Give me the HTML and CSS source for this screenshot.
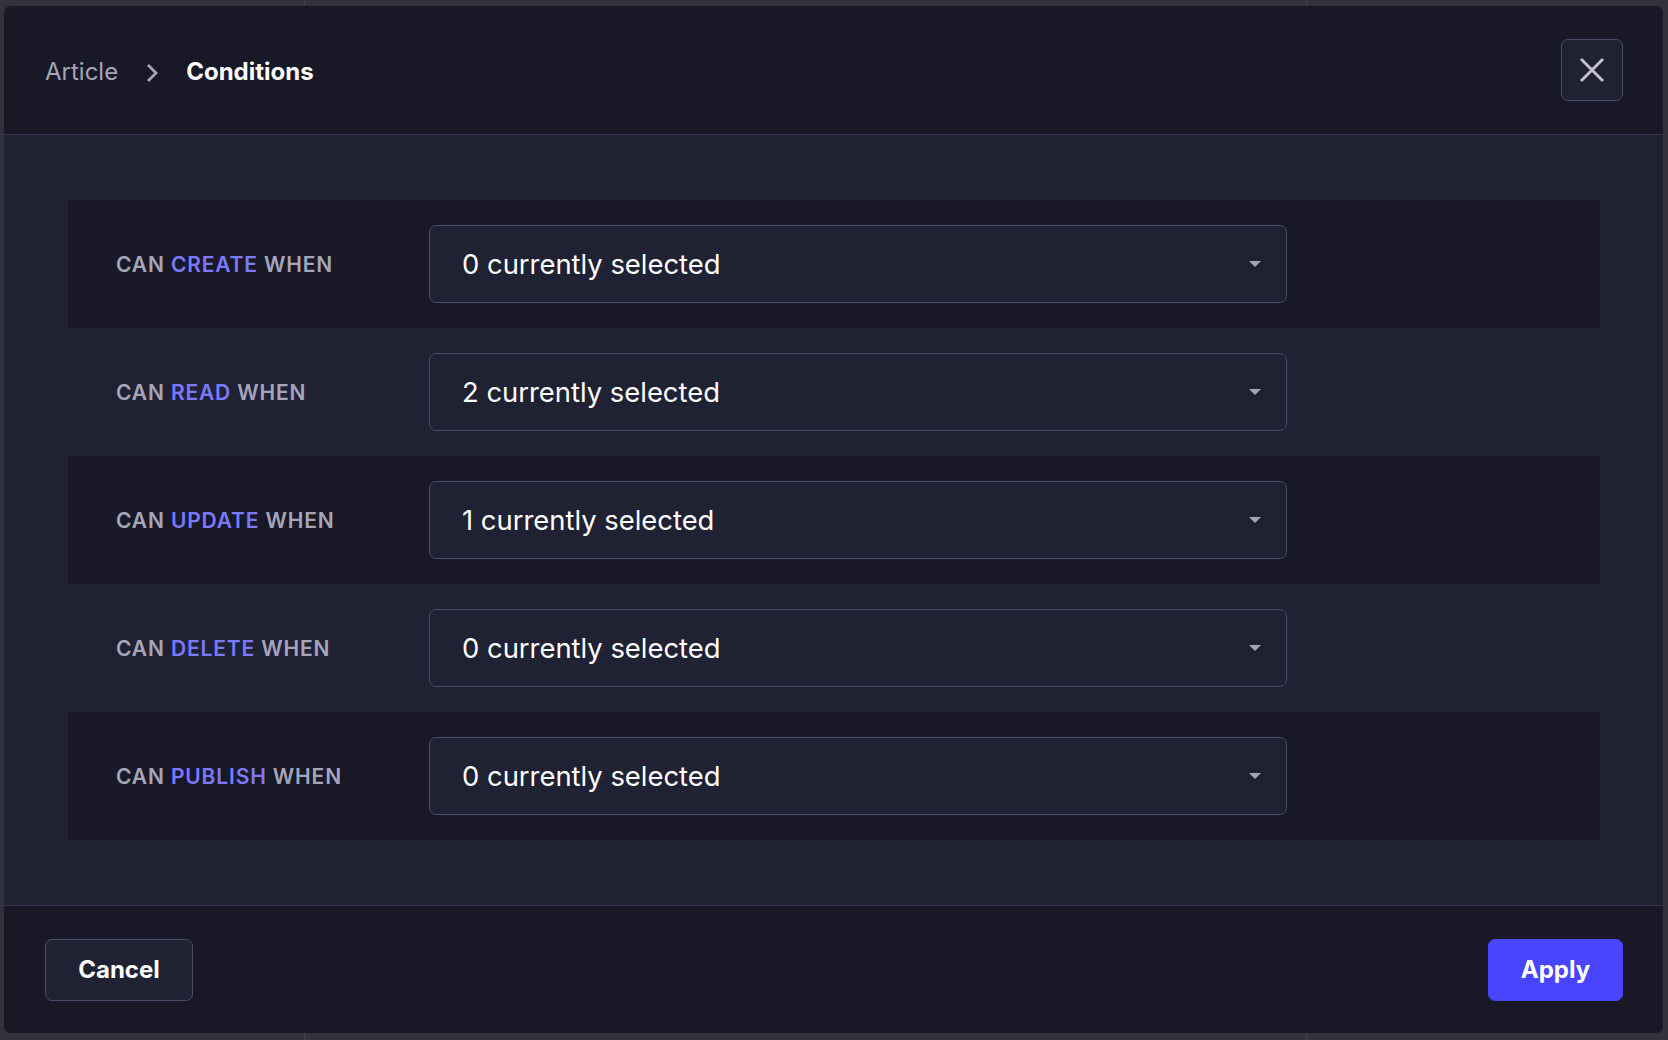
FILE: index.html
```html
<!DOCTYPE html>
<html lang="en">
<head>
<meta charset="utf-8">
<title>Conditions</title>
<link rel="stylesheet" href="styles.css">
</head>
<body>
<div class="backdrop">
  <div class="modal">
    <header class="modal-header">
      <nav class="crumbs">
        <span class="crumb">Article</span>
        <svg class="crumb-sep" width="14" height="20" viewBox="0 0 14 20" aria-hidden="true"><path d="M3 2 L11 10 L3 18" fill="none" stroke="#a5a5ba" stroke-width="2.8"/></svg>
        <span class="crumb current">Conditions</span>
      </nav>
      <button class="close-btn" aria-label="Close">
        <svg width="26" height="26" viewBox="0 0 26 26" aria-hidden="true"><path d="M2 2 L24 24 M24 2 L2 24" stroke="#c0c0cf" stroke-width="3"/></svg>
      </button>
    </header>
    <main class="modal-body">
      <div class="row dark">
        <div class="label">CAN <span class="act">CREATE</span> WHEN</div>
        <div class="select"><span>0 currently selected</span><span class="caret"></span></div>
      </div>
      <div class="row">
        <div class="label">CAN <span class="act">READ</span> WHEN</div>
        <div class="select"><span>2 currently selected</span><span class="caret"></span></div>
      </div>
      <div class="row dark">
        <div class="label">CAN <span class="act">UPDATE</span> WHEN</div>
        <div class="select"><span>1 currently selected</span><span class="caret"></span></div>
      </div>
      <div class="row">
        <div class="label">CAN <span class="act">DELETE</span> WHEN</div>
        <div class="select"><span>0 currently selected</span><span class="caret"></span></div>
      </div>
      <div class="row dark">
        <div class="label">CAN <span class="act">PUBLISH</span> WHEN</div>
        <div class="select"><span>0 currently selected</span><span class="caret"></span></div>
      </div>
    </main>
    <footer class="modal-footer">
      <button class="btn secondary">Cancel</button>
      <button class="btn primary">Apply</button>
    </footer>
  </div>
</div>
</body>
</html>
```
FILE: styles.css
```css
* { box-sizing: border-box; }
html, body { margin: 0; padding: 0; }
body {
  width: 1668px;
  height: 1040px;
  overflow: hidden;
  background: #32323f;
  font-family: Inter, "Liberation Sans", sans-serif;
}
.backdrop {
  height: 1040px;
  padding: 6px 5px 7px 4px;
  background:
    linear-gradient(#3c3c4a, #3c3c4a) 304px 0 / 2px 100% no-repeat,
    linear-gradient(#3c3c4a, #3c3c4a) 1306px 0 / 2px 100% no-repeat,
    #32323f;
}
.modal {
  height: 100%;
  display: flex;
  flex-direction: column;
  background: #212134;
  border-radius: 7px;
  overflow: hidden;
}
.modal-header {
  height: 129px;
  flex: none;
  display: flex;
  align-items: center;
  justify-content: space-between;
  padding: 0 40px 0 41px;
  background: #181826;
  border-bottom: 1px solid #32324d;
}
.crumbs {
  display: flex;
  align-items: center;
  gap: 27px;
  margin-top: 4px;
  font-size: 24px;
  line-height: 1;
}
.crumb { color: #a5a5ba; }
.crumb.current { color: #ffffff; font-weight: 700; }
.crumb-sep { display: block; margin-top: 2px; }
.close-btn {
  width: 62px;
  height: 62px;
  margin-top: 0;
  display: flex;
  align-items: center;
  justify-content: center;
  padding: 0;
  background: #212134;
  border: 1.5px solid #4a4a6a;
  border-radius: 7px;
}
.close-btn svg { display: block; }
.modal-body {
  flex: 1;
  padding: 65px 63px 65px 64px;
  display: flex;
  flex-direction: column;
}
.row {
  height: 128px;
  display: flex;
  align-items: center;
  padding-left: 48px;
}
.row.dark { background: #181826; }
.label {
  width: 313px;
  flex: none;
  font-size: 21px;
  font-weight: 600;
  color: #a5a5ba;
  letter-spacing: 0.85px;
}
.act { color: #7b79ff; }
.select {
  width: 858px;
  height: 78px;
  display: flex;
  align-items: center;
  justify-content: space-between;
  padding: 0 25px 0 32px;
  background: #212134;
  border: 1.5px solid #4a4a6a;
  border-radius: 7px;
  color: #ffffff;
  font-size: 27.4px;
}
.caret {
  width: 0;
  height: 0;
  border-left: 6px solid transparent;
  border-right: 6px solid transparent;
  border-top: 6px solid #a5a5ba;
}
.modal-footer {
  height: 128px;
  flex: none;
  display: flex;
  align-items: center;
  justify-content: space-between;
  padding: 0 40px 0 41px;
  background: #181826;
  border-top: 1px solid #32324d;
}
.btn {
  height: 62px;
  border-radius: 7px;
  font-family: Inter, "Liberation Sans", sans-serif;
  font-size: 24px;
  font-weight: 700;
  color: #ffffff;
  cursor: pointer;
}
.btn.secondary {
  width: 148px;
  background: #212134;
  border: 1.5px solid #4a4a6a;
}
.btn.primary {
  width: 135px;
  background: #4945ff;
  border: 1.5px solid #4945ff;
}
```
